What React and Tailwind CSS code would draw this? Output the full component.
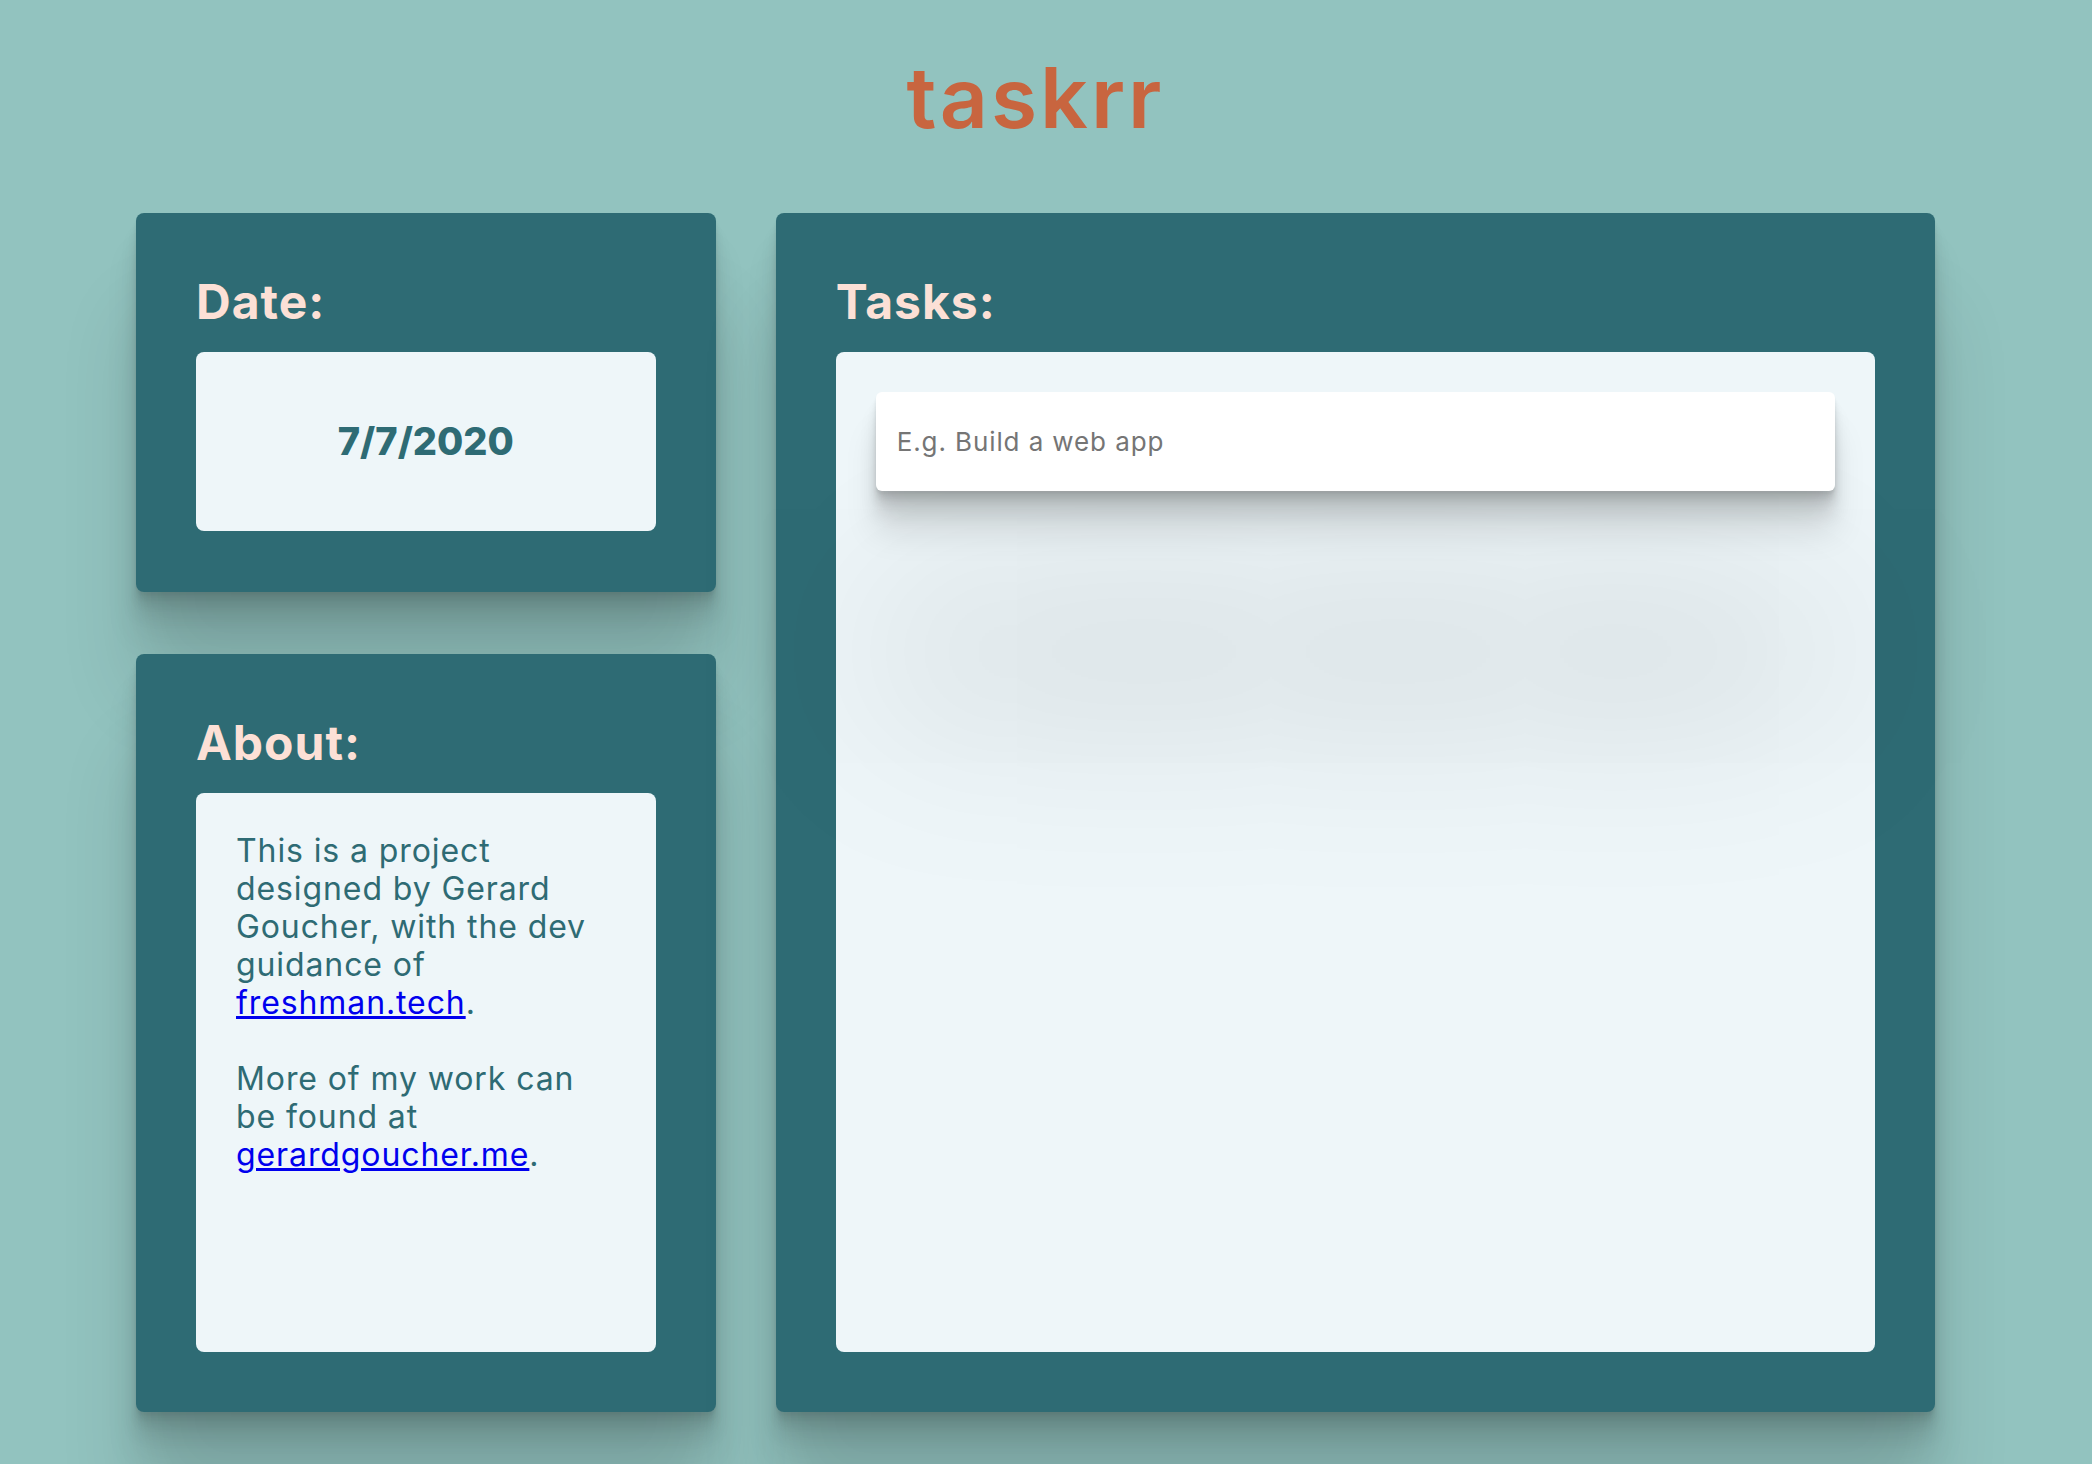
import React from 'react';

const cardShadow =
  'shadow-[0_2.8px_2.2px_rgba(0,0,0,0.034),0_6.7px_5.3px_rgba(0,0,0,0.048),0_12.5px_10px_rgba(0,0,0,0.06),0_22.3px_17.9px_rgba(0,0,0,0.072),0_41.8px_33.4px_rgba(0,0,0,0.086),0_100px_80px_rgba(0,0,0,0.12)]';

const Heading = ({ children }) => (
  <h2 className="h-[58px] mb-[21px] text-[48px] leading-[58px] font-bold tracking-[1px] text-[#fce0d6]">
    {children}
  </h2>
);

const App = () => {
  return (
    <div className="min-h-screen bg-[#92c3bf] pt-[56px] font-['Inter',sans-serif] overflow-hidden">
      <div className="ml-[136px] w-[1799px]">
        <h1 className="text-center text-[84px] leading-none font-semibold tracking-[3px] text-[#c8653f]">
          taskrr
        </h1>

        <div className="mt-[73px] grid grid-cols-[1fr_2fr] gap-[60px] h-[1199px]">
          <div className="flex flex-col gap-[62px]">
            <section className={`bg-[#2e6b74] rounded-lg p-[60px] pb-[61px] ${cardShadow}`}>
              <Heading>Date:</Heading>
              <div className="h-[179px] rounded-lg bg-[#eef6f9] flex items-center justify-center">
                <span className="text-[38px] font-extrabold text-[#2e6b74]">7/7/2020</span>
              </div>
            </section>

            <section className={`flex-1 flex flex-col bg-[#2e6b74] rounded-lg p-[60px] ${cardShadow}`}>
              <Heading>About:</Heading>
              <div className="flex-1 rounded-lg bg-[#eef6f9] p-[40px] pt-[39px]">
                <p className="text-[32px] leading-[38px] tracking-[0.9px] text-[#2e6b74]">
                  This is a project designed by Gerard Goucher, with the dev guidance of{' '}
                  <a href="#" className="text-[#0000ee] underline">freshman.tech</a>.
                  <br />
                  <br />
                  More of my work can be found at{' '}
                  <a href="#" className="text-[#0000ee] underline">gerardgoucher.me</a>.
                </p>
              </div>
            </section>
          </div>

          <section className={`flex flex-col bg-[#2e6b74] rounded-lg p-[60px] ${cardShadow}`}>
            <Heading>Tasks:</Heading>
            <div className="flex-1 rounded-lg bg-[#eef6f9] p-[40px]">
              <input
                type="text"
                placeholder="E.g. Build a web app"
                className="w-full h-[99px] rounded-md bg-white px-[21px] text-[26px] tracking-[0.9px] text-[#333] placeholder:text-[#757575] outline-none shadow-[0_2.8px_2.2px_rgba(0,0,0,0.05),0_6.7px_5.3px_rgba(0,0,0,0.065),0_12.5px_10px_rgba(0,0,0,0.08),0_22.3px_17.9px_rgba(0,0,0,0.09),0_41.8px_33.4px_rgba(0,0,0,0.1),0_210px_200px_rgba(0,0,0,0.15)]"
              />
            </div>
          </section>
        </div>
      </div>
    </div>
  );
};

export default App;
